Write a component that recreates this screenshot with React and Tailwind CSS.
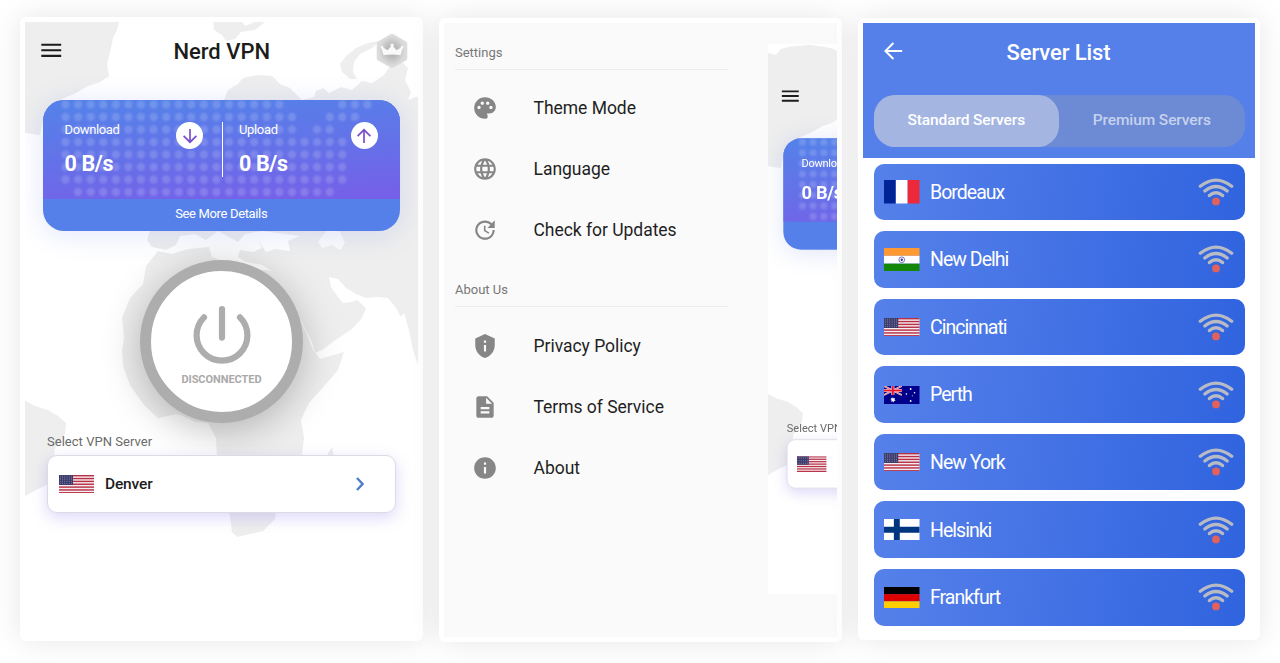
import React from "react";
import {
  MdPalette,
  MdLanguage,
  MdUpdate,
  MdPrivacyTip,
  MdDescription,
  MdInfo,
  MdMenu,
} from "react-icons/md";

const DOT_ROWS = [
  [[0, 17], [22, 24]],
  [[0, 18], [21, 23]],
  [[0, 18], [20, 21]],
  [[0, 22]],
  [[0, 22]],
  [[0, 22]],
  [[0, 22]],
  [[1, 21]],
];

function DotPattern() {
  const dots = [];
  DOT_ROWS.forEach((ranges, r) =>
    ranges.forEach(([a, b]) => {
      for (let c = a; c <= b; c++) {
        dots.push(<circle key={`${r}-${c}`} cx={22.5 + c * 12.58} cy={4.5 + r * 12.5} r="4.2" />);
      }
    })
  );
  return (
    <svg className="absolute inset-0 h-full w-full blur-[1px]" viewBox="0 0 357.5 98.5" fill="#fff" fillOpacity="0.16">
      {dots}
    </svg>
  );
}

function WorldMap() {
  return (
    <svg className="absolute bottom-0 left-0 h-[646px] w-[393px]" viewBox="25 -10 393 646" fill="#eeeeee">
      <g className="blur-[0.7px]">
        <path d="M20 -2 L34 2 40 -5 52 -8 75 -10 100 -6 116 2 126 6 120 18 117 30 113 38 111 48 109 56 107 64 109 76 100 82 88 86 76 93 62 99 50 108 43 120 40 135 32 134 20 132Z" />
        <path d="M213 20 h28 l4 6 10 -4 h10 l-10 8 -14 2 -6 7 -9 2 -4 -6 -8 -5Z" />
        <path d="M224 100 L228 90 238 84 243 78 258 75 272 76 280 84 290 88 297 95 302 100 314 97 316 91 323 88 329 93 341 87 352 90 362 81 372 83 384 75 390 66 400 60 408 68 405 80 411 92 408 100 424 94 V375 L418 365 413 350 409 330 404 313 401 317 396 308 388 298 377 297 366 298 356 294 346 288 338 279 329 277 331 287 338 297 343 303 352 302 357 300 366 308 362 318 352 329 337 339 322 350 315 353 312 342 302 322 290 304 281 288 272 271 262 265 246 262 238 257 240 250 253 252 262 248 258 240 266 252 275 249 290 251 288 241 300 236 262 231 245 234 238 242 225 235 218 231 206 240 195 234 180 236 176 245 166 250 152 247 147 240 150 231 180 100Z" />
        <path d="M342 72 L340 64 346 56 356 48 368 43 380 41 372 48 360 54 354 62 353 72 357 79 350 79Z" />
        <path d="M158 251 L172 254 188 249 209 247 212 257 226 262 245 270 266 270 278 272 284 290 296 312 306 332 313 350 320 359 344 352 338 370 325 385 309 403 301 420 304 438 302 455 285 474 277 500 275 519 263 531 250 534 237 537 232 532 230 516 224 492 217 460 216 438 208 423 196 422 178 414 158 418 144 405 130 385 123 366 122 350 124 338 122 318 130 298 143 284 146 266Z" />
        <path d="M328 453 L332 447 334 456 330 470 325 468Z" />
        <path d="M20 398 L35 406 48 410 58 416 66 423 65 434 55 448 53 470 49 484 36 490 20 499Z" />
        <path fill="#fbfbfb" d="M322 236 L330 228 340 232 345 243 340 250 332 245 322 248 318 242Z" />
      </g>
    </svg>
  );
}

function UsFlag({ className }) {
  const stripes = [0, 2, 4, 6, 8, 10, 12];
  const stars = [];
  for (let r = 0; r < 5; r++) for (let c = 0; c < 6; c++) stars.push([1.3 + c * 2.3, 1.1 + r * 1.95]);
  return (
    <svg className={className} viewBox="0 0 36 19" preserveAspectRatio="none">
      <rect width="36" height="19" fill="#f4eef0" />
      {stripes.map((s) => (
        <rect key={s} y={(s * 19) / 13} width="36" height={19 / 13} fill="#b92f45" />
      ))}
      <rect width="14.4" height="10.23" fill="#3b3b6d" />
      {stars.map(([x, y]) => (
        <circle key={`${x}-${y}`} cx={x} cy={y} r="0.42" fill="#c9c9dc" />
      ))}
    </svg>
  );
}

function FranceFlag() {
  return (
    <svg className="h-[23.5px] w-[35.5px]" viewBox="0 0 36 24" preserveAspectRatio="none">
      <rect width="12" height="24" fill="#002395" />
      <rect x="12" width="12" height="24" fill="#fff" />
      <rect x="24" width="12" height="24" fill="#ed2939" />
    </svg>
  );
}

function IndiaFlag() {
  return (
    <svg className="h-[23.5px] w-[35.5px]" viewBox="0 0 36 24" preserveAspectRatio="none">
      <rect width="36" height="8" fill="#ff9933" />
      <rect y="8" width="36" height="8" fill="#fff" />
      <rect y="16" width="36" height="8" fill="#138808" />
      <circle cx="18" cy="12" r="2.9" fill="none" stroke="#34349a" strokeWidth="0.7" />
      <circle cx="18" cy="12" r="1.2" fill="#34349a" />
    </svg>
  );
}

function AustraliaFlag() {
  return (
    <svg className="h-[18px] w-[35.5px]" viewBox="0 0 36 18" preserveAspectRatio="none">
      <rect width="36" height="18" fill="#00008b" />
      <path d="M0 0 L18 9 M18 0 L0 9" stroke="#fff" strokeWidth="1.8" />
      <path d="M0 0 L18 9 M18 0 L0 9" stroke="#e02a3c" strokeWidth="0.7" />
      <path d="M9 0 V9 M0 4.5 H18" stroke="#fff" strokeWidth="3" />
      <path d="M9 0 V9 M0 4.5 H18" stroke="#e8112d" strokeWidth="1.8" />
      <path fill="#fff" d="M9 11 l.7 1.5 1.7-.4 -.8 1.4 1.2 1.1 -1.7.3 -.2 1.6 -.9-1.3 -1.4 1 .2-1.7 -1.6-.4 1.4-.9 -.5-1.5 1.5.6Z" />
      <g fill="#fff">
        <circle cx="27" cy="3" r="0.9" />
        <circle cx="31" cy="6.8" r="0.8" />
        <circle cx="22.8" cy="8" r="0.8" />
        <circle cx="27" cy="15" r="0.9" />
        <circle cx="28.7" cy="9.8" r="0.5" />
      </g>
    </svg>
  );
}

function FinlandFlag() {
  return (
    <svg className="h-[21.5px] w-[35.5px]" viewBox="0 0 36 22" preserveAspectRatio="none">
      <rect width="36" height="22" fill="#fff" />
      <path d="M10 0h6v22h-6zM0 8h36v6H0z" fill="#003580" />
    </svg>
  );
}

function GermanyFlag() {
  return (
    <svg className="h-[21.5px] w-[35.5px]" viewBox="0 0 36 21" preserveAspectRatio="none">
      <rect width="36" height="7" fill="#000" />
      <rect y="7" width="36" height="7" fill="#dd0000" />
      <rect y="14" width="36" height="7" fill="#ffce00" />
    </svg>
  );
}

function CrownBadge() {
  return (
    <svg className="h-[36px] w-[32px]" viewBox="0 0 32 36">
      <defs>
        <radialGradient id="badge" cx="0.5" cy="0.5" r="0.55">
          <stop offset="0" stopColor="#acacac" />
          <stop offset="0.4" stopColor="#c0c0c0" />
          <stop offset="0.75" stopColor="#dadada" />
          <stop offset="1" stopColor="#dedede" />
        </radialGradient>
      </defs>
      <path
        d="M14.5 1.2 Q16 .4 17.5 1.2 L30 8.4 Q31.3 9.2 31.3 10.8 V25 Q31.3 26.6 30 27.4 L17.5 34.6 Q16 35.4 14.5 34.6 L2 27.4 Q.7 26.6 .7 25 V10.8 Q.7 9.2 2 8.4Z"
        fill="url(#badge)"
      />
      <path
        d="M7.5 22 L5.6 15.6 A1.4 1.4 0 1 1 7.4 14.8 L11.5 17.2 14.9 13.4 A1.7 1.7 0 1 1 17.3 13.4 L20.6 17.2 24.8 14.8 A1.4 1.4 0 1 1 26.6 15.6 L24.6 22 Q16 20.8 7.5 22Z"
        fill="#fafafa"
      />
    </svg>
  );
}

function Speed({ label, up }) {
  return (
    <div className="flex w-[157px] justify-between">
      <div className="w-[100px] text-white">
        <div className="text-[13px] leading-[15px] tracking-[-0.35px]">{label}</div>
        <div className="mt-[15px] text-[21.5px] font-bold leading-[24px] tracking-[-0.35px]">0 B/s</div>
      </div>
      <div className="mr-[18.5px] flex h-[27px] w-[27px] items-center justify-center rounded-full bg-white">
        <svg className={up ? "h-[16px] w-[16px]" : "h-[16px] w-[16px] rotate-180"} viewBox="0 0 16 16" fill="none" stroke="#7a4fcb" strokeWidth="1.7">
          <path d="M8 15V1.8M1.6 8.2L8 1.8l6.4 6.4" />
        </svg>
      </div>
    </div>
  );
}

function HomeScreen({ peek = false }) {
  return (
    <div className="relative flex h-[614px] w-[393px] shrink-0 flex-col">
      <WorldMap />
      <div className="relative flex h-[57px] items-center justify-between pl-[13px] pr-[10px]">
        <MdMenu className="size-[26.5px] text-[#1c1c1c]" />
        {!peek && (
          <>
            <h1 className="ml-[3px] mt-[2px] text-[22px] font-medium leading-[26px] text-[#1c1c1c]">Nerd VPN</h1>
            <CrownBadge />
          </>
        )}
      </div>
      <div className="relative ml-[17.5px] mt-[21px] h-[131px] w-[357.5px] shrink-0 rounded-[21px] shadow-[0_3px_28px_rgba(86,118,233,0.18)]">
        <div className="flex h-full flex-col overflow-hidden rounded-[21px] bg-[#5680e9]">
          <div className="relative h-[98.5px] bg-[linear-gradient(176deg,#5680e9_8%,#6570e8_55%,#775fe9_100%)]">
            <DotPattern />
            <div className="relative flex pl-[22px] pt-[22px]">
              <Speed label="Download" />
              {!peek && (
                <>
                  <div className="mr-[16.5px] h-[55px] w-px bg-white" />
                  <Speed label="Upload" up />
                </>
              )}
            </div>
          </div>
          {!peek && (
            <div className="flex flex-1 items-center justify-center pb-px text-[13px] leading-[16px] tracking-[-0.35px] text-white">
              See More Details
            </div>
          )}
        </div>
      </div>
      <div className="relative ml-[115px] mt-[29px] flex h-[163px] w-[163px] shrink-0 flex-col items-center rounded-full border-[11px] border-[#adadad] bg-white pt-[32px] shadow-[0_8px_38px_rgba(0,0,0,0.25)]">
        {!peek && (
          <>
            <svg className="h-[62px] w-[60px] shrink-0" viewBox="0 0 60 62" fill="none" stroke="#adadad" strokeWidth="6.2" strokeLinecap="round">
              <path d="M30 6V34.6M12 14.4a25.4 25.4 0 1 0 36 0" />
            </svg>
            <div className="mt-[8px] text-[11px] font-bold leading-[14px] tracking-[-0.05px] text-[#a9a9a9]">DISCONNECTED</div>
          </>
        )}
      </div>
      <div className="relative ml-[22px] mt-[11px] text-[13px] leading-[16px] tracking-[0.03px] text-[#6a6a6a]">
        Select VPN Server
      </div>
      <div className="relative ml-[22px] mt-[4.5px] flex h-[58px] w-[349px] items-center rounded-[10px] border border-[#dcdbe4] bg-white pl-[11px] shadow-[0_5px_15px_rgba(119,98,232,0.25)]">
        <UsFlag className="mt-px h-[18.5px] w-[35px]" />
        {!peek && (
          <>
            <span className="ml-[11px] mt-[3px] text-[15.5px] font-medium tracking-[-0.15px] text-[#1c1c1c]">Denver</span>
            <svg className="ml-auto mr-[31px] mt-px h-[14px] w-[8px]" viewBox="0 0 8 14" fill="none" stroke="#4e7cc9" strokeWidth="2.4">
              <path d="M1 1l5.6 6L1 13" />
            </svg>
          </>
        )}
      </div>
    </div>
  );
}

const SETTINGS = [
  { label: "Theme Mode", Icon: MdPalette },
  { label: "Language", Icon: MdLanguage },
  { label: "Check for Updates", Icon: MdUpdate },
];
const ABOUT = [
  { label: "Privacy Policy", Icon: MdPrivacyTip },
  { label: "Terms of Service", Icon: MdDescription },
  { label: "About", Icon: MdInfo },
];

function MenuSection({ title, items }) {
  return (
    <section>
      <div className="flex h-[27px] items-center text-[13px] text-[#777]">{title}</div>
      <div className="mt-[2.5px] h-px bg-[#ececec]" />
      <ul className="pt-[8.5px]">
        {items.map(({ label, Icon }) => (
          <li key={label} className="flex h-[61px] items-center pl-[17px]">
            <Icon className="mb-px size-[26px] text-[#868686]" />
            <span className="ml-[35.5px] text-[17.5px] tracking-[-0.03px] text-[#1f1f1f]">{label}</span>
          </li>
        ))}
      </ul>
    </section>
  );
}

function DrawerScreen() {
  return (
    <div className="flex h-full overflow-hidden bg-[#fafafa]">
      <nav className="ml-[11px] mr-[40px] flex w-[273px] shrink-0 flex-col gap-[15.5px] pt-[16px]">
        <MenuSection title="Settings" items={SETTINGS} />
        <MenuSection title="About Us" items={ABOUT} />
      </nav>
      <div className="mt-[21px] h-[550px] w-[69px] shrink-0 overflow-hidden bg-white">
        <div className="origin-top-left scale-[0.85] pt-[32.5px]">
          <HomeScreen peek />
        </div>
      </div>
    </div>
  );
}

const SERVERS = [
  { name: "Bordeaux", flag: <FranceFlag /> },
  { name: "New Delhi", flag: <IndiaFlag /> },
  { name: "Cincinnati", flag: <UsFlag className="h-[18.5px] w-[35.5px]" /> },
  { name: "Perth", flag: <AustraliaFlag /> },
  { name: "New York", flag: <UsFlag className="h-[18.5px] w-[35.5px]" /> },
  { name: "Helsinki", flag: <FinlandFlag /> },
  { name: "Frankfurt", flag: <GermanyFlag /> },
];

function WifiSignal() {
  return (
    <svg className="ml-auto mr-[11px] h-[28px] w-[36px]" viewBox="0 0 36 28" fill="none" stroke="#b9bbc4" strokeWidth="3.3" strokeLinecap="round">
      <path d="M2.3 8.3Q18 -4 33.7 8.3" />
      <path d="M6.8 13Q18 4 29.2 13" />
      <path d="M11.4 17.6Q18 12 24.6 17.6" />
      <circle cx="18" cy="23.4" r="3.9" fill="#e2625b" stroke="none" />
    </svg>
  );
}

function ServerListScreen() {
  return (
    <div>
      <header className="h-[135px] bg-[#5680e9] px-[11px]">
        <div className="flex h-[57px] items-center">
          <svg className="mb-px ml-[10px] h-[18px] w-[19px]" viewBox="0 0 19 18" fill="none" stroke="#fff" strokeWidth="1.9">
            <path d="M18.2 9H1.6M9.4 1L1.4 9l8 8" />
          </svg>
          <h2 className="ml-[104px] mt-[2px] text-[22px] font-medium leading-[26px] tracking-[-0.1px] text-white">Server List</h2>
        </div>
        <div className="mt-[14.5px] flex h-[52.5px] w-[371px] rounded-[21px] bg-[#6c8bd4] text-[15.5px] font-medium tracking-[-0.1px]">
          <div className="flex flex-1 items-center justify-center rounded-[21px] bg-[#a4b5e2] text-white">Standard Servers</div>
          <div className="flex flex-1 items-center justify-center text-[#c6d1ee]">Premium Servers</div>
        </div>
      </header>
      <ul className="flex flex-col gap-[11.1px] px-[11px] pt-[5.5px]">
        {SERVERS.map(({ name, flag }) => (
          <li
            key={name}
            className="flex h-[56.5px] w-[371px] items-center rounded-[10px] bg-[linear-gradient(100deg,#5681ea,#3063df)] pl-[10.5px]"
          >
            {flag}
            <span className="ml-[10.5px] mt-px text-[19.5px] tracking-[-0.98px] text-white">{name}</span>
            <WifiSignal />
          </li>
        ))}
      </ul>
    </div>
  );
}

export default function App() {
  return (
    <main className="flex h-[663px] w-[1280px] items-start gap-[16px] overflow-hidden bg-white pl-[20px] pt-[17px] font-['Roboto','Liberation_Sans',sans-serif]">
      <div className="h-[624px] w-[403px] shrink-0 rounded-[6px] bg-white p-[5px] shadow-[0_0_30px_rgba(0,0,0,0.1)]">
        <div className="h-full overflow-hidden">
          <HomeScreen />
        </div>
      </div>
      <div className="mt-px h-[624px] w-[402.5px] shrink-0 rounded-[6px] bg-white p-[5px] shadow-[0_0_30px_rgba(0,0,0,0.1)]">
        <DrawerScreen />
      </div>
      <div className="mt-px h-[622px] w-[402.5px] shrink-0 rounded-[6px] bg-white p-[5px] shadow-[0_0_30px_rgba(0,0,0,0.1)]">
        <ServerListScreen />
      </div>
    </main>
  );
}
